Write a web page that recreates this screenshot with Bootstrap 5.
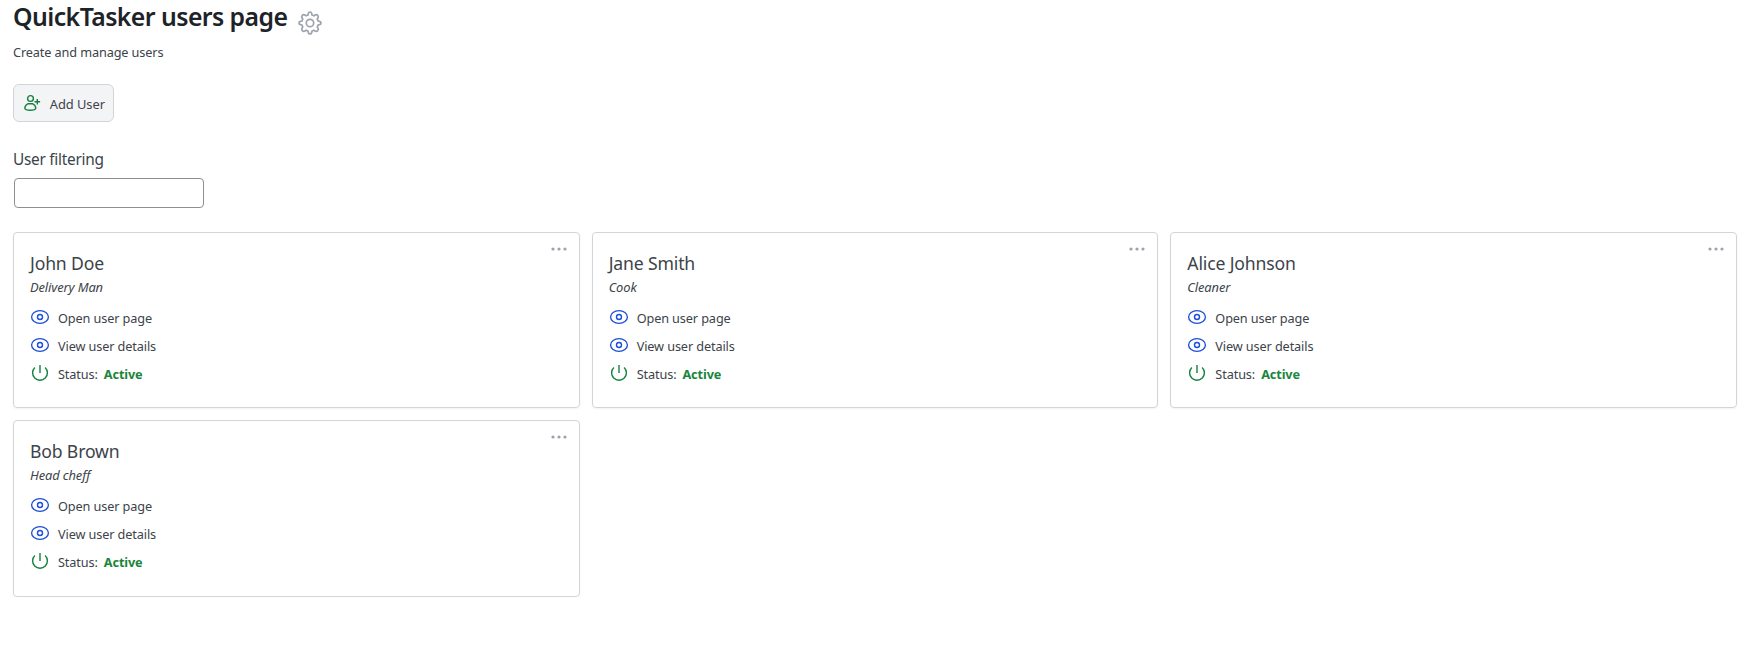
<!DOCTYPE html>
<html lang="en">
<head>
<meta charset="utf-8">
<meta name="viewport" content="width=device-width, initial-scale=1">
<title>QuickTasker users page</title>
<link href="https://cdn.jsdelivr.net/npm/bootstrap@5.3.0/dist/css/bootstrap.min.css" rel="stylesheet">
<style>
body{font-family:"Noto Sans","Open Sans",sans-serif;font-size:12.7px;letter-spacing:-.11px;line-height:20px;color:#3c434a;background:#fff}
svg{display:block;flex:none;fill:none}
.page{padding:0 10px 0 13px}
.page-title{font-size:24.8px;line-height:33px;height:36px;font-weight:600;color:#1d2327;letter-spacing:-.55px}
.gear{margin:11px 0 0 10.600px;color:#9ca3af}
.subtitle{margin-top:6px}
.btn-add{width:101px;height:38px;margin-top:22px;padding:0 8px 0 9px;font-size:12.9px;letter-spacing:-.05px;color:#3c434a;background:#f3f4f6;border:1px solid #d1d5db;border-radius:6px}
.btn-add:hover{background:#e5e7eb;border-color:#d1d5db}
.btn-add svg{color:#15803d}
.add-label{padding-top:3px}
.filter-label{font-size:15.4px;letter-spacing:-.27px;line-height:24px;margin-top:26px}
.filter-input{width:190px;height:30px;margin:6px 0 0 1px;border:1px solid #8c8f94;border-radius:4px}
.users{display:grid;grid-template-columns:repeat(3,1fr);gap:12px;margin-top:24px}
.user-card{height:176.4px;padding:18px 16px 0;border:1px solid #d1d5db;border-radius:4px;box-shadow:0 1px 2px rgba(0,0,0,.05)}
.user-name{font-size:17.6px;letter-spacing:-.15px;line-height:24px;font-weight:400}
.user-role{font-size:12.9px;line-height:20px;margin-top:2px;font-style:italic}
.user-rows{margin-top:7px}
.user-row{height:28px;line-height:28px;gap:8px}
.user-row svg{margin-top:-1.800px}
.eye{color:#1d4ed8}
.power{color:#15803d}
.status{color:#1a853c;font-weight:700;margin-left:-2px}
.more{top:13px;right:11px;color:#9ca3af}
</style>
</head>
<body>
<svg width="0" height="0" class="position-absolute" aria-hidden="true">
<symbol id="i-eye" viewBox="0 0 20 20"><path d="M1.600 10C1.600 6.400 5.400 3.600 10 3.600S18.400 6.400 18.400 10S14.600 16.400 10 16.400S1.600 13.600 1.600 10Z" stroke="currentColor" stroke-width="1.350" stroke-linejoin="round"/><circle cx="10" cy="10" r="2.500" stroke="currentColor" stroke-width="1.400"/></symbol>
<symbol id="i-power" viewBox="0 0 20 20"><path d="M10 2V10M4.900 4.500A7.400 7.400 0 1 0 15.100 4.500" stroke="currentColor" stroke-width="1.400"/></symbol>
<symbol id="i-more" viewBox="0 0 18 6"><g fill="currentColor"><circle cx="3" cy="3" r="1.600"/><circle cx="9" cy="3" r="1.600"/><circle cx="15" cy="3" r="1.600"/></g></symbol>
</svg>
<main class="page">
<header class="d-flex align-items-start">
<h1 class="page-title mb-0">QuickTasker users page</h1>
<svg class="gear" width="24" height="24" viewBox="0 0 24 24" stroke="currentColor" stroke-width="1.700" stroke-linejoin="round"><circle cx="12" cy="12" r="3.700"/><path d="M10.300 2.500 Q10.600 1 12 1 T13.700 2.500 L14 4 Q15 4.300 15.900 4.800 L17.200 4 Q18.600 3.200 19.700 4.300 T20 6.800 L19.200 8.100 Q19.700 9 20 10 L21.500 10.300 Q23 10.600 23 12 T21.500 13.700 L20 14 Q19.700 15 19.200 15.900 L20 17.200 Q20.800 18.600 19.700 19.700 T17.200 20 L15.900 19.200 Q15 19.700 14 20 L13.700 21.500 Q13.400 23 12 23 T10.300 21.500 L10 20 Q9 19.700 8.100 19.200 L6.800 20 Q5.400 20.800 4.300 19.700 T4 17.200 L4.800 15.900 Q4.300 15 4 14 L2.500 13.700 Q1 13.400 1 12 T2.500 10.300 L4 10 Q4.300 9 4.800 8.100 L4 6.800 Q3.200 5.400 4.300 4.300 T6.800 4 L8.100 4.800 Q9 4.300 10 4Z"/></svg>
</header>
<p class="subtitle mb-0">Create and manage users</p>
<button type="button" class="btn btn-add d-flex align-items-center justify-content-between">
<svg width="18" height="18" viewBox="0 0 18 18" stroke="currentColor" stroke-width="1.400"><circle cx="7.500" cy="4.500" r="2.900"/><path d="M4.800 9.800H9.800C11.500 10.600 12.700 12.200 12.800 14.200C12.500 15.700 10.300 16.300 7.300 16.300S2.100 15.700 1.800 14.200C1.900 12.200 3.100 10.600 4.800 9.800ZM14.300 5V10.600M11.500 7.800H17.100"/></svg>
<span class="add-label">Add User</span>
</button>
<label class="filter-label d-block" for="filter">User filtering</label>
<input id="filter" type="text" class="filter-input d-block">
<section class="users">
<article class="user-card position-relative"><svg class="more position-absolute" width="18" height="6"><use href="#i-more"/></svg>
<h2 class="user-name mb-0"><span>John Doe</span></h2><p class="user-role mb-0">Delivery Man</p>
<div class="user-rows"><div class="user-row d-flex align-items-center"><svg class="eye" width="20" height="20"><use href="#i-eye"/></svg><span>Open user page</span></div><div class="user-row d-flex align-items-center"><svg class="eye" width="20" height="20"><use href="#i-eye"/></svg><span>View user details</span></div><div class="user-row d-flex align-items-center"><svg class="power" width="20" height="20"><use href="#i-power"/></svg><span>Status:</span><span class="status">Active</span></div></div></article>
<article class="user-card position-relative"><svg class="more position-absolute" width="18" height="6"><use href="#i-more"/></svg>
<h2 class="user-name mb-0"><span>Jane Smith</span></h2><p class="user-role mb-0">Cook</p>
<div class="user-rows"><div class="user-row d-flex align-items-center"><svg class="eye" width="20" height="20"><use href="#i-eye"/></svg><span>Open user page</span></div><div class="user-row d-flex align-items-center"><svg class="eye" width="20" height="20"><use href="#i-eye"/></svg><span>View user details</span></div><div class="user-row d-flex align-items-center"><svg class="power" width="20" height="20"><use href="#i-power"/></svg><span>Status:</span><span class="status">Active</span></div></div></article>
<article class="user-card position-relative"><svg class="more position-absolute" width="18" height="6"><use href="#i-more"/></svg>
<h2 class="user-name mb-0"><span>Alice Johnson</span></h2><p class="user-role mb-0">Cleaner</p>
<div class="user-rows"><div class="user-row d-flex align-items-center"><svg class="eye" width="20" height="20"><use href="#i-eye"/></svg><span>Open user page</span></div><div class="user-row d-flex align-items-center"><svg class="eye" width="20" height="20"><use href="#i-eye"/></svg><span>View user details</span></div><div class="user-row d-flex align-items-center"><svg class="power" width="20" height="20"><use href="#i-power"/></svg><span>Status:</span><span class="status">Active</span></div></div></article>
<article class="user-card position-relative"><svg class="more position-absolute" width="18" height="6"><use href="#i-more"/></svg>
<h2 class="user-name mb-0"><span>Bob Brown</span></h2><p class="user-role mb-0">Head cheff</p>
<div class="user-rows"><div class="user-row d-flex align-items-center"><svg class="eye" width="20" height="20"><use href="#i-eye"/></svg><span>Open user page</span></div><div class="user-row d-flex align-items-center"><svg class="eye" width="20" height="20"><use href="#i-eye"/></svg><span>View user details</span></div><div class="user-row d-flex align-items-center"><svg class="power" width="20" height="20"><use href="#i-power"/></svg><span>Status:</span><span class="status">Active</span></div></div></article>
</section>
</main>
<script src="https://cdn.jsdelivr.net/npm/bootstrap@5.3.0/dist/js/bootstrap.bundle.min.js"></script>
</body>
</html>
